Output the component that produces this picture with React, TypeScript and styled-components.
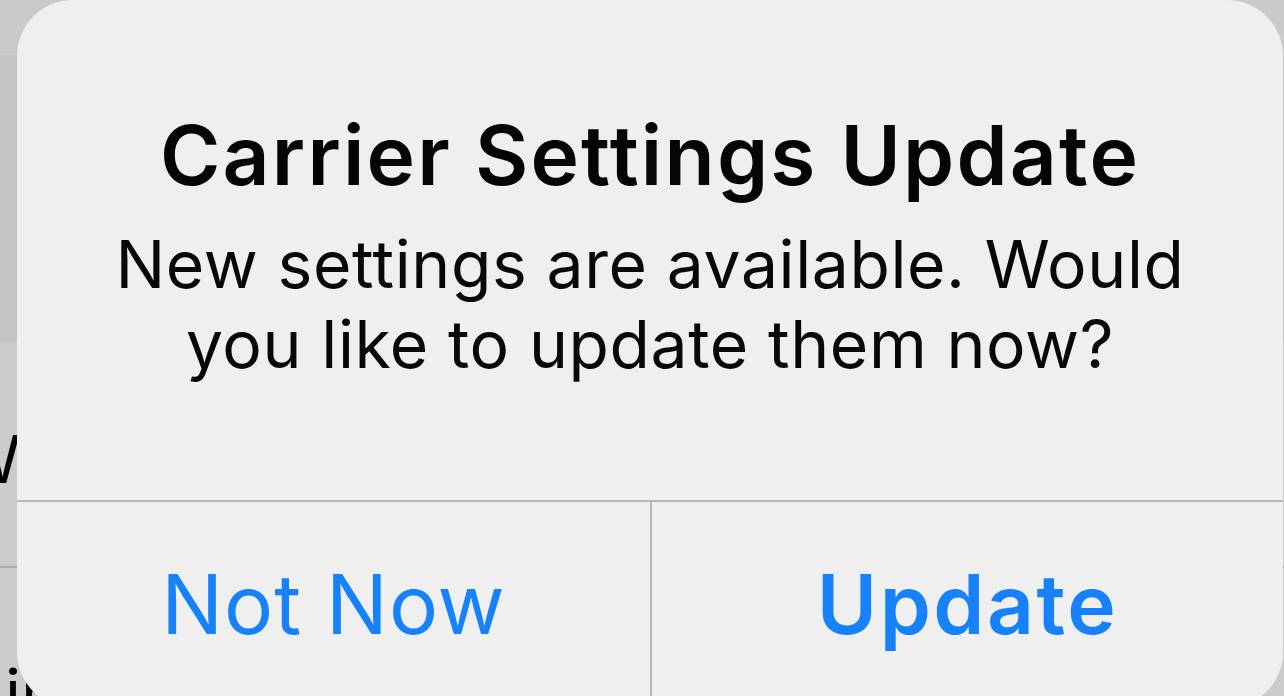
import React from "react";
import styled, { createGlobalStyle } from "styled-components";

const Global = createGlobalStyle`
  html, body {
    margin: 0;
    padding: 0;
    width: 1284px;
    height: 696px;
    overflow: hidden;
    background: #cbcbcb;
  }
  * { box-sizing: border-box; }
`;

const Screen = styled.div`
  position: relative;
  width: 1284px;
  height: 696px;
  overflow: hidden;
  font-family: Inter, "Liberation Sans", sans-serif;
`;

const Backdrop = styled.div`
  display: flex;
  flex-direction: column;
  width: 100%;
  height: 100%;
`;

const Band = styled.div<{ $bg: string; $h: number; $line?: boolean }>`
  flex: 0 0 ${(p) => p.$h}px;
  background: ${(p) => p.$bg};
  border-bottom: ${(p) => (p.$line ? "2px solid #aeaeae" : "none")};
  display: flex;
  align-items: center;
  overflow: hidden;
`;

const BackLabel = styled.span<{ $shift: number; $top: number }>`
  font-size: 66px;
  color: #000;
  margin-left: ${(p) => p.$shift}px;
  margin-top: ${(p) => p.$top}px;
  white-space: nowrap;
`;

const Alert = styled.div`
  position: absolute;
  left: 17px;
  top: 0;
  width: 1266px;
  height: 708px;
  border-radius: 56px;
  background: #efeff0;
  display: flex;
  flex-direction: column;
  overflow: hidden;
`;

const Header = styled.div`
  display: flex;
  flex-direction: column;
  align-items: center;
  padding: 108px 20px 0;
  height: 500px;
`;

const Title = styled.h1`
  margin: 0;
  font-size: 82px;
  line-height: 96px;
  font-weight: 600;
  color: #050505;
  letter-spacing: 2.2px;
  white-space: nowrap;
`;

const Message = styled.p`
  margin: 20px 0 0;
  font-size: 66px;
  line-height: 80px;
  font-weight: 400;
  color: #080808;
  text-align: center;
  letter-spacing: 0.6px;
  white-space: nowrap;
`;

const Actions = styled.div`
  flex: 1;
  display: grid;
  grid-template-columns: 1fr 1fr;
  border-top: 2px solid #b7b7b9;
`;

const ActionButton = styled.button<{ $primary?: boolean }>`
  all: unset;
  display: flex;
  align-items: center;
  justify-content: center;
  font-family: Inter, "Liberation Sans", sans-serif;
  font-size: 82px;
  font-weight: ${(p) => (p.$primary ? 600 : 400)};
  letter-spacing: ${(p) => (p.$primary ? 2.5 : 1)}px;
  color: #1681f8;
  padding-bottom: 2px;
  & + & {
    border-left: 2px solid #b7b7b9;
  }
`;

export default function App() {
  return (
    <Screen>
      <Global />
      <Backdrop>
        <Band $bg="#cacaca" $h={55} />
        <Band $bg="#c3c3c6" $h={287} />
        <Band $bg="#cbcbcb" $h={226} $line>
          <BackLabel $shift={-44} $top={10}>Wi-Fi</BackLabel>
        </Band>
        <Band $bg="#cbcbcb" $h={160}>
          <BackLabel $shift={5} $top={90}>in</BackLabel>
        </Band>
      </Backdrop>
      <Alert role="alertdialog">
        <Header>
          <Title>Carrier Settings Update</Title>
          <Message>
            New settings are available. Would
            <br />
            you like to update them now?
          </Message>
        </Header>
        <Actions>
          <ActionButton>Not Now</ActionButton>
          <ActionButton $primary>Update</ActionButton>
        </Actions>
      </Alert>
    </Screen>
  );
}
